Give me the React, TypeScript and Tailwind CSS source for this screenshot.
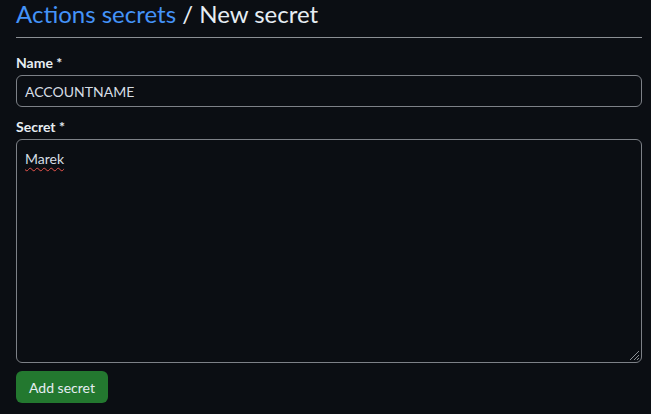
import React from "react";

export default function App() {
    return (
        <div className="w-[651px] h-[414px] overflow-hidden bg-[#0b0e13] text-[#e6edf3] pl-4 pr-[9px]" style={{ fontFamily: 'Lato, "Noto Sans", sans-serif' }}>
            <h1 className="text-[24px] leading-[28px] font-normal pb-[9px] border-b border-[#8b8f94]">
                <a className="text-[#4493f8]">Actions secrets</a> / New secret
            </h1>

            <form className="pt-[16px]">
                <label className="block text-[14px] leading-[20px] font-bold mb-[2px] -mt-[1px]">Name *</label>
                <div className="h-[32px] rounded-[6px] border border-[#7d8187] bg-[#0b0e13] px-[8px] flex items-center text-[14px] text-[#d6dde4]">
                    ACCOUNTNAME
                </div>

                <label className="block text-[14px] leading-[20px] font-bold mt-[10px] mb-[2px]">Secret *</label>
                <div className="relative h-[224px] rounded-[6px] border border-[#7d8187] bg-[#0b0e13] px-[8px] py-[9px] text-[14px] leading-[20px] text-[#d6dde4]">
                    <span className="underline decoration-wavy decoration-[#e5534b] decoration-1 underline-offset-[3px]">Marek</span>
                    <svg className="absolute right-[1px] bottom-[1px]" width="13" height="13" viewBox="0 0 13 13">
                        <path d="M12 3 L3 12 M12 7 L7 12 M12 10 L10 12" stroke="#8b8f94" strokeWidth="1" />
                    </svg>
                </div>

                <button type="button" className="mt-[8px] h-[32px] px-[13px] rounded-[6px] bg-[#23782f] text-[#e6edf3] text-[14px] font-normal">
                    Add secret
                </button>
            </form>
        </div>
    );
}
